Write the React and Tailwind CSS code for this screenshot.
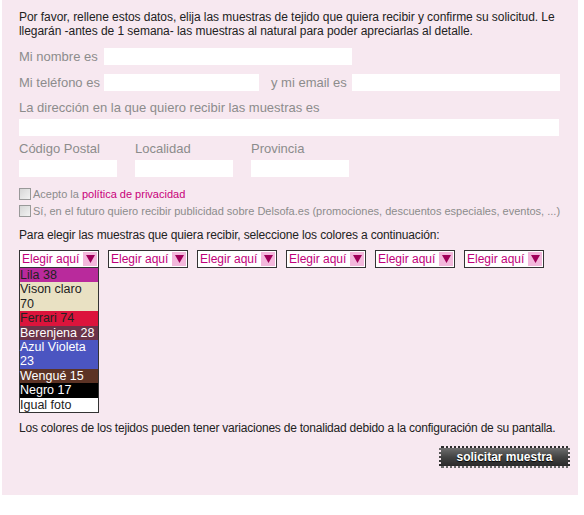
import React from "react";

const swatches = [
  { name: "Lila 38", bg: "bg-[#b92a9c]", fg: "text-[#222]" },
  { name: "Vison claro 70", bg: "bg-[#e9e1c3]", fg: "text-[#222]" },
  { name: "Ferrari 74", bg: "bg-[#dc143c]", fg: "text-[#222]" },
  { name: "Berenjena 28", bg: "bg-[#6b3349]", fg: "text-white" },
  { name: "Azul Violeta 23", bg: "bg-[#4b55c1]", fg: "text-white" },
  { name: "Wengué 15", bg: "bg-[#5c3325]", fg: "text-white" },
  { name: "Negro 17", bg: "bg-black", fg: "text-white" },
  { name: "Igual foto", bg: "bg-white", fg: "text-[#222]" },
];

function Select() {
  return (
    <div className="flex h-[18px] w-[80px] items-center overflow-hidden border border-[#333] bg-white">
      <span className="flex-1 whitespace-nowrap pl-[2px] text-[12px] leading-[16px] text-[#c0007a]">Elegir aquí</span>
      <span className="mr-[1px] flex h-[14px] w-[14px] items-center justify-center bg-[#f3b8dc]">
        <svg width="9" height="8" viewBox="0 0 9 8">
          <path d="M0 0 H9 L4.5 8 Z" fill="#a0005a" />
        </svg>
      </span>
    </div>
  );
}

function Field({ className }) {
  return <div className={"h-[17px] bg-white " + className} />;
}

export default function App() {
  return (
    <div className="bg-white" style={{ fontFamily: '"Liberation Sans", Arial, sans-serif' }}>
      <div className="ml-[2px] h-[495px] w-[576px] bg-[#f7e8f0] pl-[17px] pt-[10px]">
        <p className="w-[545px] text-[12px] leading-[14px] tracking-[-0.05px] text-[#222]">
          Por favor, rellene estos datos, elija las muestras de tejido que quiera recibir y confirme su solicitud. Le
          llegarán -antes de 1 semana- las muestras al natural para poder apreciarlas al detalle.
        </p>

        <div className="mt-[10px] flex items-center text-[13px] leading-[17px] text-[#8c8c8c]">
          <span className="w-[85px]">Mi nombre es</span>
          <Field className="w-[248px]" />
        </div>

        <div className="mt-[9px] flex items-center text-[13px] leading-[17px] text-[#8c8c8c]">
          <span className="w-[85px]">Mi teléfono es</span>
          <Field className="w-[155px]" />
          <span className="ml-[12px] w-[81px]">y mi email es</span>
          <Field className="w-[208px]" />
        </div>

        <div className="mt-[9px] text-[13px] leading-[16px] text-[#8c8c8c]">
          La dirección en la que quiero recibir las muestras es
        </div>
        <Field className="mt-[3px] w-[540px]" />

        <div className="mt-[5px] flex gap-[18px] text-[13px] text-[#8c8c8c]">
          <div className="flex w-[98px] flex-col gap-[3px]">
            <span className="leading-[16px]">Código Postal</span>
            <Field className="w-[98px]" />
          </div>
          <div className="flex w-[98px] flex-col gap-[3px]">
            <span className="leading-[16px]">Localidad</span>
            <Field className="w-[98px]" />
          </div>
          <div className="flex w-[98px] flex-col gap-[3px]">
            <span className="leading-[16px]">Provincia</span>
            <Field className="w-[98px]" />
          </div>
        </div>

        <div className="mt-[10px] flex items-center text-[11px] leading-[14px] text-[#8c8c8c]">
          <span className="mr-[2px] inline-block h-[12px] w-[12px] border border-[#999] bg-gradient-to-br from-[#d6d6d6] to-[#f2f2f2]" />
          <span>
            Acepto la <span className="text-[#c8007a]">política de privacidad</span>
          </span>
        </div>
        <div className="mt-[3px] flex items-center text-[11px] leading-[14px] text-[#8c8c8c]">
          <span className="mr-[2px] inline-block h-[12px] w-[12px] border border-[#999] bg-gradient-to-br from-[#d6d6d6] to-[#f2f2f2]" />
          <span>Sí, en el futuro quiero recibir publicidad sobre Delsofa.es (promociones, descuentos especiales, eventos, ...)</span>
        </div>

        <p className="mt-[10px] whitespace-nowrap text-[12px] leading-[14px] tracking-[-0.15px] text-[#222]">
          Para elegir las muestras que quiera recibir, seleccione los colores a continuación:
        </p>

        <div className="mt-[8px] flex gap-[9px]">
          <div className="flex flex-col">
            <Select />
            <div className="w-[80px] border border-t-0 border-[#333]">
              {swatches.map((s) => (
                <div key={s.name} className={"text-[12.5px] leading-[14.4px] " + s.bg + " " + s.fg}>
                  {s.name}
                </div>
              ))}
            </div>
          </div>
          <Select />
          <Select />
          <Select />
          <Select />
          <Select />
        </div>

        <p className="mt-[8px] whitespace-nowrap text-[12px] leading-[14px] tracking-[-0.22px] text-[#222]">
          Los colores de los tejidos pueden tener variaciones de tonalidad debido a la configuración de su pantalla.
        </p>

        <div className="mt-[11px] flex justify-end pr-[8px]">
          <div className="flex h-[22px] w-[131px] items-center justify-center rounded-[2px] border-[2px] border-dotted border-[#f7e8f0] bg-gradient-to-b from-[#6e6e6e] via-[#444] to-[#2a2a2a] text-[12px] font-bold text-white [text-shadow:0_1px_1px_#000]">
            solicitar muestra
          </div>
        </div>
      </div>
    </div>
  );
}
